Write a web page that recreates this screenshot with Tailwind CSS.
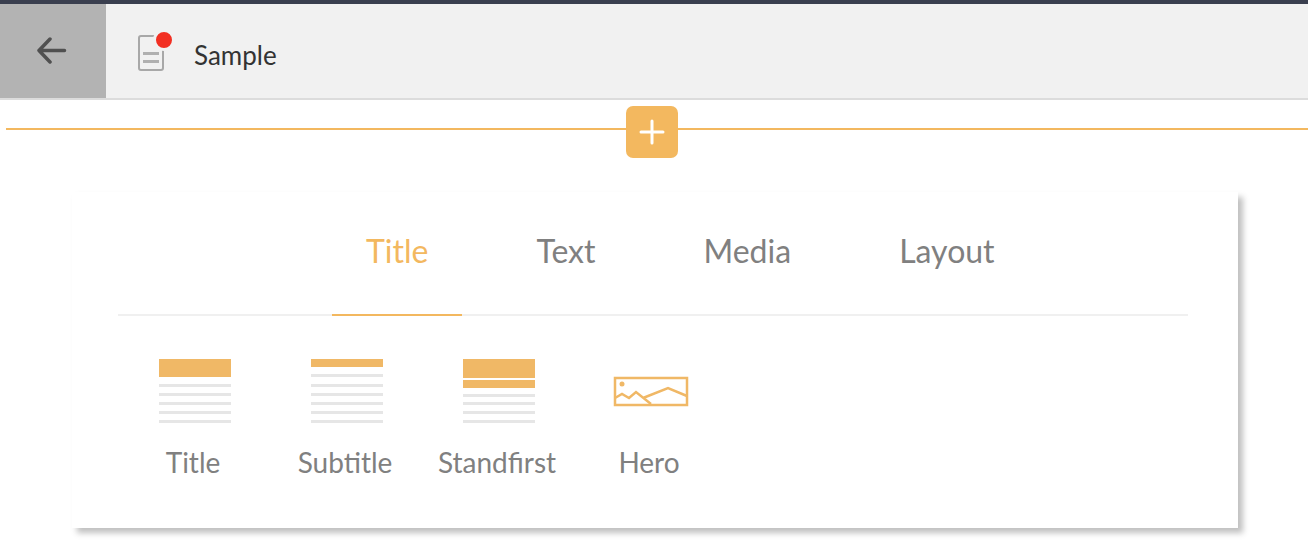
<!DOCTYPE html>
<html lang="en">
<head>
    <meta charset="UTF-8">
    <title>Sample</title>
    <script src="https://cdn.jsdelivr.net/npm/@tailwindcss/browser@4"></script>
</head>
<body class="bg-white h-[556px] overflow-hidden font-['Lato',sans-serif]">

    <div class="h-1 bg-[#3a3f4f]"></div>
    <header class="flex h-[96px] bg-[#f1f1f1] border-b-2 border-[#dcdcdc]">
        <div class="flex w-[106px] items-center justify-center bg-[#b3b3b3]">
            <svg width="30" height="27" viewBox="0 0 30 27" fill="none" stroke="#505050" stroke-width="3.500" stroke-linecap="round" stroke-linejoin="round" class="-ml-[3px] -mt-[1px]">
                <path d="M2 13.500H27.500M13 2L2 13.500L13 25"/>
            </svg>
        </div>
        <div class="relative ml-[32px] mt-[31px] h-[36px] w-[26px] rounded-[3px] border-2 border-[#a8a8a8]">
            <div class="mt-[15px] ml-[3px] h-[3px] w-[16px] bg-[#b0b0b0]"></div>
            <div class="mt-[5px] ml-[3px] h-[3px] w-[16px] bg-[#b0b0b0]"></div>
            <div class="absolute -top-[8px] left-[13px] h-[16px] w-[16px] rounded-full border-[3px] border-[#f1f1f1] bg-[#f22f22] box-content"></div>
        </div>
        <span class="ml-[30px] mt-[32px] self-start text-[26px] text-[#333]">Sample</span>
    </header>

    <div class="relative ml-[6px] mt-[28px] h-[2px] bg-[#f3b85f]">
        <button class="absolute left-[620px] -top-[22px] flex h-[52px] w-[52px] items-center justify-center rounded-[7px] bg-[#f3b85f]">
            <svg width="26" height="26" viewBox="0 0 26 26" fill="none" stroke="#fff" stroke-width="3" stroke-linecap="round">
                <path d="M13 2V24M2 13H24"/>
            </svg>
        </button>
    </div>

    <section class="ml-[72px] mt-[62px] h-[336px] w-[1166px] bg-white px-[46px] shadow-[5px_5px_6px_rgba(0,0,0,0.25)]">
        <nav class="flex h-[124px] w-[1070px] gap-[40px] border-b-2 border-[#f0f0f0] pl-[214px] text-[32px] text-[#808080]">
            <a class="h-[124px] border-b-2 border-[#f3b85f] px-[34px] pt-[35px] text-[#f3b85f]">Title</a>
            <a class="px-[34px] pt-[35px]">Text</a>
            <a class="px-[34px] pt-[35px]">Media</a>
            <a class="px-[34px] pt-[35px]">Layout</a>
        </nav>

        <div class="-ml-px flex text-[28px] text-[#808080]">
            <div class="flex w-[152px] flex-col items-center pt-[43px]">
                <div class="ml-[4px] flex h-[64px] w-[72px] flex-col">
                    <div class="h-[18px] bg-[#f0b866]"></div>
                    <div class="mt-[7px] h-[3px] bg-[#e6e6e6]"></div>
                    <div class="mt-[6px] h-[3px] bg-[#e6e6e6]"></div>
                    <div class="mt-[6px] h-[3px] bg-[#e6e6e6]"></div>
                    <div class="mt-[6px] h-[3px] bg-[#e6e6e6]"></div>
                    <div class="mt-[6px] h-[3px] bg-[#e6e6e6]"></div>
                </div>
                <span class="mt-[18px]">Title</span>
            </div>
            <div class="flex w-[152px] flex-col items-center pt-[43px]">
                <div class="ml-[4px] flex h-[64px] w-[72px] flex-col">
                    <div class="h-[8px] bg-[#f0b866]"></div>
                    <div class="mt-[7px] h-[3px] bg-[#e6e6e6]"></div>
                    <div class="mt-[7px] h-[3px] bg-[#e6e6e6]"></div>
                    <div class="mt-[6px] h-[3px] bg-[#e6e6e6]"></div>
                    <div class="mt-[6px] h-[3px] bg-[#e6e6e6]"></div>
                    <div class="mt-[6px] h-[3px] bg-[#e6e6e6]"></div>
                    <div class="mt-[6px] h-[3px] bg-[#e6e6e6]"></div>
                </div>
                <span class="mt-[18px]">Subtitle</span>
            </div>
            <div class="flex w-[152px] flex-col items-center pt-[43px]">
                <div class="ml-[4px] flex h-[64px] w-[72px] flex-col">
                    <div class="h-[19px] bg-[#f0b866]"></div>
                    <div class="mt-[2px] h-[8px] bg-[#f0b866]"></div>
                    <div class="mt-[6px] h-[3px] bg-[#e6e6e6]"></div>
                    <div class="mt-[5px] h-[3px] bg-[#e6e6e6]"></div>
                    <div class="mt-[6px] h-[3px] bg-[#e6e6e6]"></div>
                    <div class="mt-[6px] h-[3px] bg-[#e6e6e6]"></div>
                </div>
                <span class="mt-[18px]">Standfirst</span>
            </div>
            <div class="flex w-[152px] flex-col items-center pt-[43px]">
                <div class="ml-[4px] flex h-[64px] w-[76px] items-center justify-center">
                    <svg width="76" height="32" viewBox="0 0 76 32" fill="none" stroke="#f0b866" stroke-width="2.500" class="mt-px">
                        <rect x="2" y="2" width="72" height="27"/>
                        <circle cx="9" cy="8" r="2.500" fill="#f0b866" stroke="none"/>
                        <path d="M2 22L9 18L16 22L23 16L38 28M30 22L55 12L74 20"/>
                    </svg>
                </div>
                <span class="mt-[18px]">Hero</span>
            </div>
        </div>
    </section>

</body>
</html>
